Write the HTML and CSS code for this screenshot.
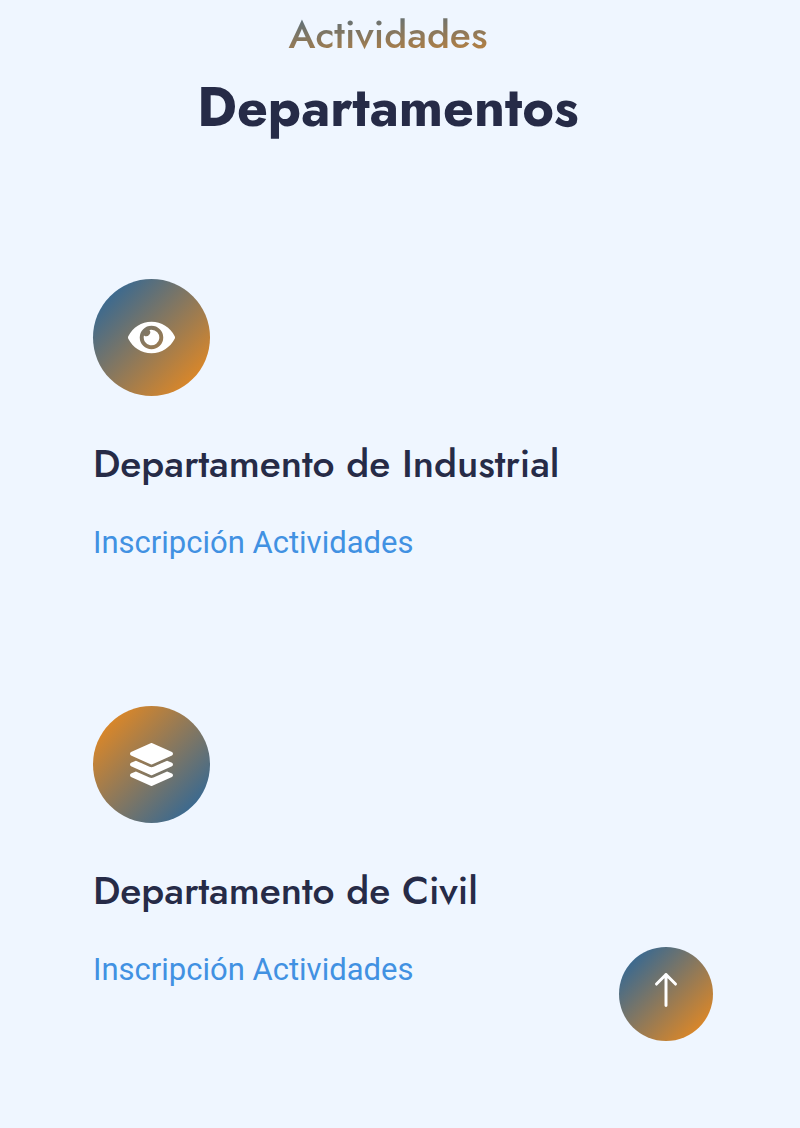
FILE: index.html
```html
<!DOCTYPE html>
<html lang="es">
<head>
<meta charset="utf-8">
<meta name="viewport" content="width=device-width, initial-scale=1">
<title>Departamentos</title>
<link rel="stylesheet" href="styles.css">
</head>
<body>
<main class="departments">
  <header class="heading">
    <p class="eyebrow">Actividades</p>
    <h1 class="title">Departamentos</h1>
  </header>
  <div class="list">
    <article class="item">
      <div class="icon">
        <svg viewBox="0 0 576 512" width="47" height="43" aria-hidden="true"><path fill="currentColor" d="M572.52 241.4C518.29 135.59 410.93 64 288 64S57.68 135.64 3.48 241.41a32.35 32.35 0 0 0 0 29.19C57.71 376.41 165.07 448 288 448s230.32-71.64 284.52-177.41a32.35 32.35 0 0 0 0-29.19zM288 400a144 144 0 1 1 144-144 143.93 143.93 0 0 1-144 144zm0-240a95.31 95.31 0 0 0-25.31 3.79 47.85 47.85 0 0 1-66.9 66.9A95.78 95.78 0 1 0 288 160z"/></svg>
      </div>
      <h2 class="name">Departamento de Industrial</h2>
      <a class="link" href="#industrial">Inscripción Actividades</a>
    </article>
    <article class="item">
      <div class="icon icon-reverse">
        <svg viewBox="0 0 512 512" width="43" height="43" aria-hidden="true"><path fill="currentColor" d="M12.41 148.02l232.94 105.67c6.8 3.09 14.49 3.09 21.29 0l232.94-105.67c16.55-7.51 16.55-32.52 0-40.03L266.65 2.31a25.607 25.607 0 0 0-21.29 0L12.41 107.98c-16.55 7.51-16.55 32.53 0 40.04zm487.18 88.28l-58.09-26.33-161.64 73.27c-7.56 3.43-15.59 5.17-23.86 5.17s-16.29-1.74-23.86-5.17L70.51 209.97l-58.1 26.33c-16.55 7.5-16.55 32.5 0 40l232.94 105.59c6.8 3.08 14.49 3.08 21.29 0L499.59 276.3c16.55-7.5 16.55-32.5 0-40zm0 127.8l-57.87-26.23-161.86 73.37c-7.56 3.43-15.59 5.17-23.86 5.17s-16.29-1.74-23.86-5.17L70.29 337.87 12.41 364.1c-16.55 7.5-16.55 32.5 0 40l232.94 105.59c6.8 3.08 14.49 3.08 21.29 0L499.59 404.1c16.55-7.5 16.55-32.5 0-40z"/></svg>
      </div>
      <h2 class="name">Departamento de Civil</h2>
      <a class="link" href="#civil">Inscripción Actividades</a>
    </article>
  </div>
</main>
<a class="to-top" href="#" aria-label="Volver arriba">
  <svg viewBox="0 0 16 16" width="38" height="38" aria-hidden="true"><path fill="none" stroke="currentColor" stroke-width="1.25" stroke-linecap="round" stroke-linejoin="round" d="M8 14.5V1.5M4 5.500l4-4 4 4"/></svg>
</a>
</body>
</html>
```
FILE: styles.css
```css
* { box-sizing: border-box; }

body {
  margin: 0;
  min-height: 100vh;
  background: #eff6ff;
  color: #262b47;
  font-family: Roboto, sans-serif;
}

.departments { padding: 7px 24px 128px 0; }

.heading {
  display: flex;
  flex-direction: column;
  align-items: center;
}

.eyebrow, .title, .name {
  margin: 0;
  font-family: Jost, Futura, Lato, sans-serif;
}

.eyebrow {
  align-self: stretch;
  color: transparent;
  background: linear-gradient(to bottom right, #1d64a3, #f78c16);
  background-clip: text;
  -webkit-background-clip: text;
  font-size: 39px;
  line-height: 56px;
  font-weight: 500;
  text-align: center;
}

.title {
  margin-top: 8px;
  font-size: 54px;
  line-height: 72px;
  font-weight: 700;
}

.list {
  display: grid;
  gap: 140px;
  padding: 136px 0 0 93px;
}

.item {
  display: flex;
  flex-direction: column;
  align-items: flex-start;
}

.icon, .to-top {
  display: flex;
  align-items: center;
  justify-content: center;
  border-radius: 50%;
  color: #fff;
  background: linear-gradient(135deg, #1d64a3, #f78c16);
}

.icon { width: 117px; height: 117px; }
.icon-reverse { background: linear-gradient(135deg, #f78c16, #1d64a3); }

.name {
  margin-top: 44px;
  font-size: 39px;
  line-height: 48px;
  font-weight: 500;
}

.link {
  margin-top: 31px;
  color: #4191e2;
  font-size: 31px;
  line-height: 47px;
  text-decoration: none;
}

.to-top {
  position: fixed;
  right: 87px;
  bottom: 87px;
  width: 94px;
  height: 94px;
  padding-bottom: 8px;
}
```
